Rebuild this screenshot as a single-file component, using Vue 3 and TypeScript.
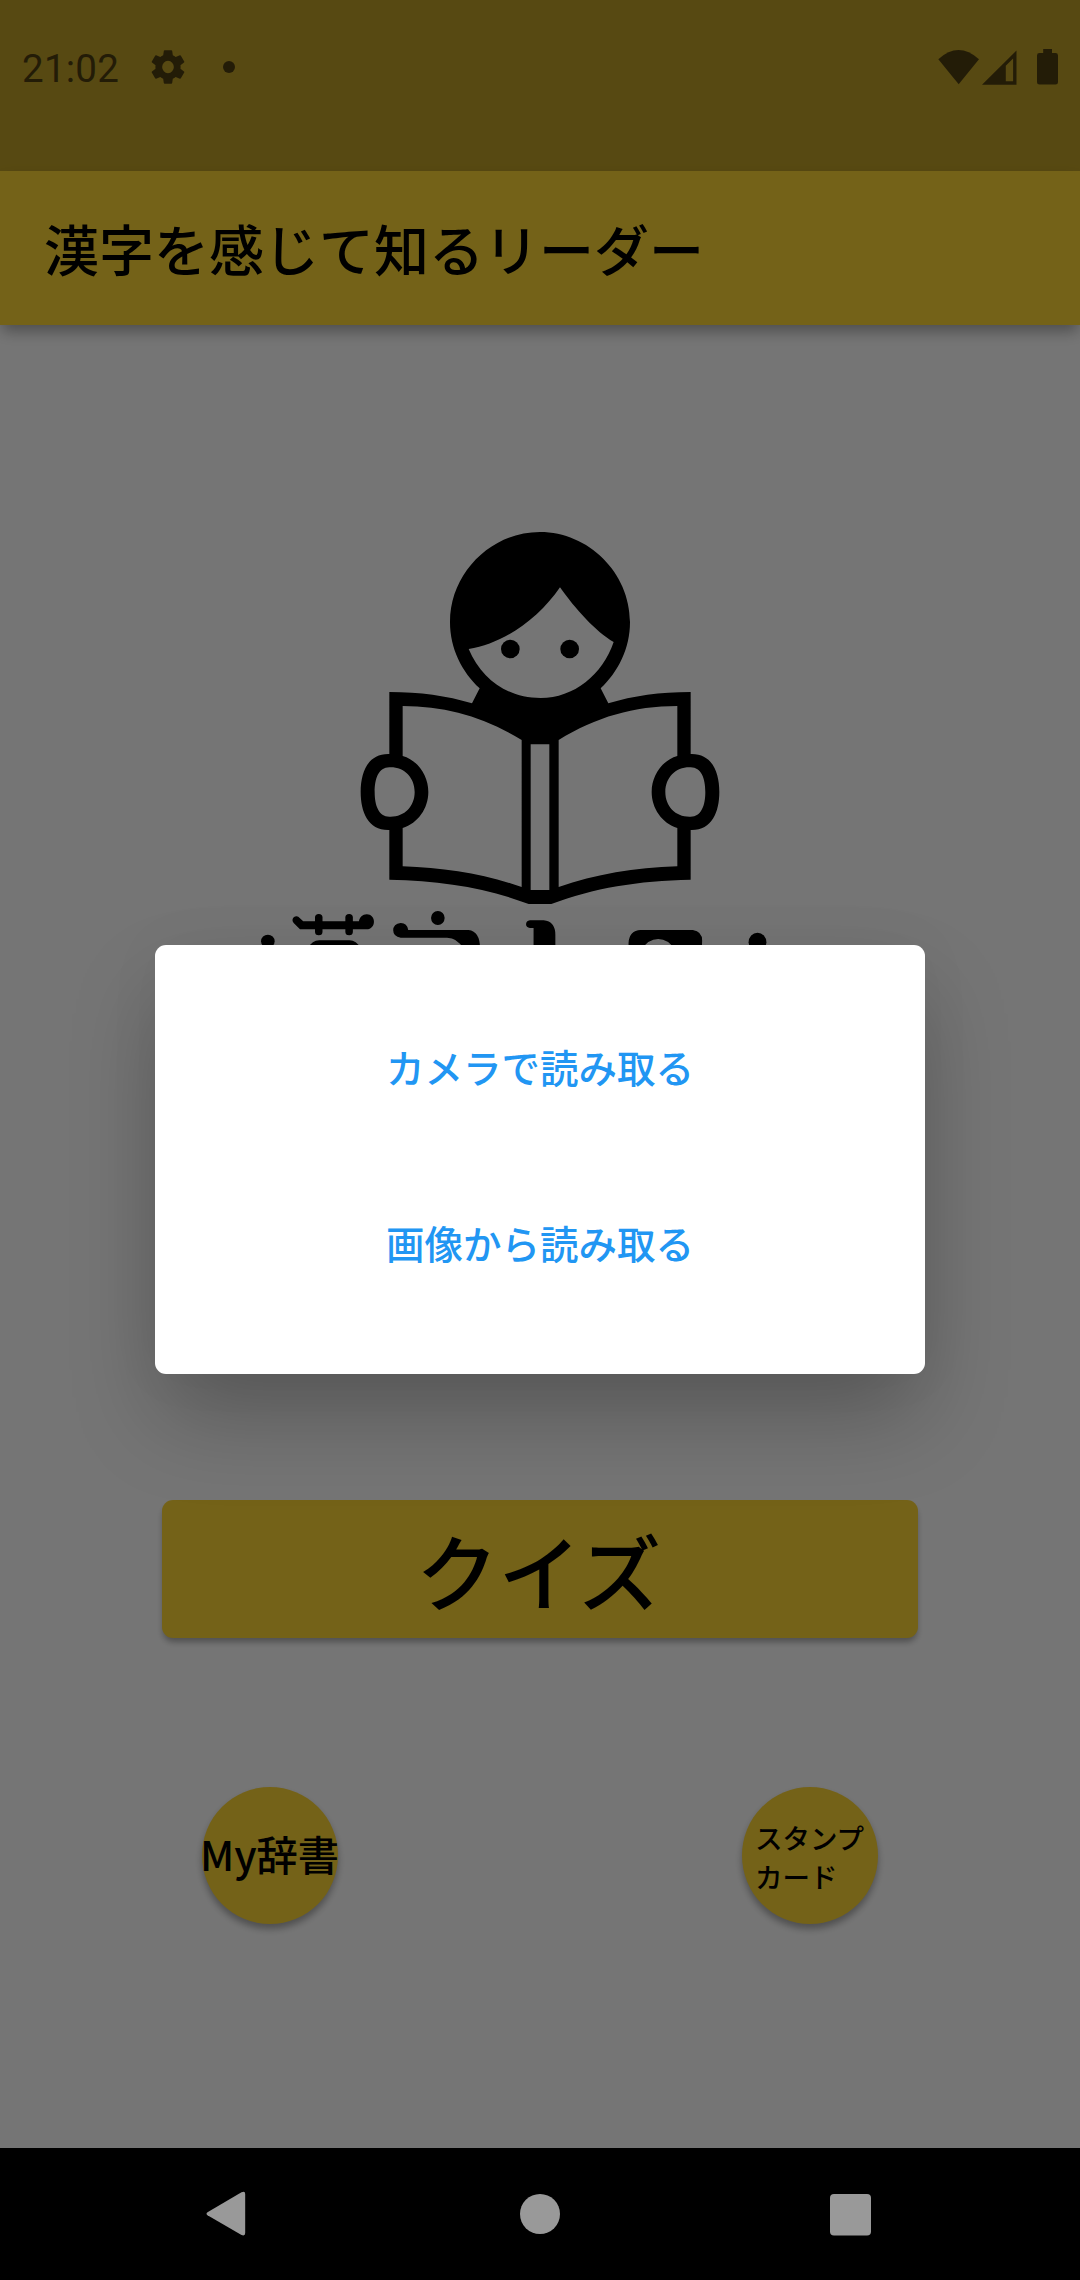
<script setup lang="ts">
import { ref } from 'vue'

const appTitle = ref('漢字を感じて知るリーダー')
const clock = ref('21:02')
const dialogActions = ref<string[]>(['カメラで読み取る', '画像から読み取る'])
</script>

<template>
  <div class="screen">
    <header class="status-bar">
      <span class="clock">{{ clock }}</span>
      <svg class="gear" viewBox="0 0 24 24">
        <path d="M19.14 12.94c.04-.3.06-.61.06-.94 0-.32-.02-.64-.07-.94l2.03-1.58a.49.49 0 0 0 .12-.61l-1.92-3.32a.49.49 0 0 0-.59-.22l-2.39.96c-.5-.38-1.03-.7-1.62-.94l-.36-2.54a.48.48 0 0 0-.48-.41h-3.84a.47.47 0 0 0-.47.41l-.36 2.54c-.59.24-1.13.57-1.62.94l-2.39-.96a.48.48 0 0 0-.59.22L2.74 8.87a.47.47 0 0 0 .12.61l2.03 1.58c-.05.3-.09.63-.09.94s.02.64.07.94l-2.03 1.58a.49.49 0 0 0-.12.61l1.92 3.32c.12.22.37.29.59.22l2.39-.96c.5.38 1.03.7 1.62.94l.36 2.54c.05.24.24.41.48.41h3.84c.24 0 .44-.17.47-.41l.36-2.54c.59-.24 1.13-.56 1.62-.94l2.39.96c.22.08.47 0 .59-.22l1.92-3.32a.47.47 0 0 0-.12-.61l-2.01-1.58zM12 15.6a3.61 3.61 0 0 1 0-7.2 3.61 3.61 0 0 1 0 7.2z" />
      </svg>
      <span class="dot"></span>
      <svg class="system-icons" viewBox="0 0 122 38">
        <path d="M.3 11.2Q20.5-7.2 41 11.2L20.7 36.2z" />
        <path fill-rule="evenodd" d="M44 36.7 78.500 2.6V36.7zM67.800 33.2H75.100V10.6L67.800 17.8z" />
        <path d="M105.2 1h8.800v4h3.600q2.400 0 2.400 2.400v26.800q0 2.400-2.400 2.400h-16.200q-2.400 0-2.400-2.400v-26.800q0-2.400 2.400-2.400h3.800z" />
      </svg>
    </header>

    <div class="app-bar"><h1>{{ appTitle }}</h1></div>

    <main class="content">
      <svg class="logo" viewBox="240 520 560 460">
        <g transform="translate(340 510) scale(.33333)">
          <path fill-rule="evenodd" d="M600 66C745 66 870 188 870 336C870 415 835 485 782 535L805 580C880 557 960 546 1052 546V732C1115 730 1138 785 1138 846S1115 962 1052 960V1109C895 1112 760 1134 634 1182H566C440 1134 305 1112 148 1109V960C85 962 62 907 62 846S85 730 148 732V546C240 546 320 557 396 580L419 535C365 485 330 415 330 336C330 188 455 66 600 66Z
            M386 417C490 401 595 327 660 232C705 296 768 366 821 396C788 494 702 564 602 564S424 507 386 417Z
            M188 588V738C234 751 265 797 265 846S234 940 188 954V1069C315 1073 435 1093 545 1131V690C432 621 318 588 188 588Z
            M1012 588V738C966 751 935 797 935 846S966 940 1012 954V1069C885 1073 765 1093 656 1131V690C768 621 882 588 1012 588Z
            M572 703H628V1140H572Z
            M148 772C192 770 224 802 224 846S192 922 148 920C116 920 104 886 104 846S116 772 148 772Z
            M1052 772C1008 770 976 802 976 846S1008 922 1052 920C1084 920 1096 886 1096 846S1084 772 1052 772Z" />
          <circle cx="511" cy="417" r="28" />
          <circle cx="689" cy="417" r="28" />
        </g>
        <g transform="translate(240 880) scale(.35714 .33333)">
          <ellipse cx="78" cy="184" rx="19" ry="20" />
          <path d="M147 121a11 12 0 0 1 20-7l10 10h156c2-12 10-21 22-21 12 0 20 10 20 22s-8 23-20 23H168l-17-18q-4-4-4-9z" />
          <rect x="210" y="102" width="21" height="64" rx="10.500" />
          <rect x="295" y="102" width="21" height="64" rx="10.500" />
          <path d="M190 205Q202 181 222 181H306Q326 181 338 205z" />
          <ellipse cx="554" cy="114" rx="19" ry="21" />
          <path d="M450 129q18 0 21 21H640Q672 154 672 205H625Q608 173 580 173H450q-21-3-21-22 0-19 21-22z" />
          <path d="M812 121H850Q883 124 883 165V210H822V144H812Q801 142 801 132.500T812 121z" />
          <path d="M1088 210V188Q1090 152 1122 150H1268Q1294 154 1294 182L1293 210H1218Q1200 177 1171 177T1124 210z" />
          <ellipse cx="1449" cy="187" rx="25" ry="29" />
        </g>
      </svg>
      <button class="quiz" type="button"><span>クイズ</span></button>
      <div class="round-row">
        <button class="round" type="button"><span>My辞書</span></button>
        <button class="round small" type="button"><span>スタンプ<br />カード</span></button>
      </div>
    </main>

    <nav class="nav-bar">
      <svg viewBox="0 0 48 48"><path d="M4.500 22.300 38.500 2.300Q42.200.5 42.200 4V43Q42.200 46.500 38.500 45L4.500 25.300Q2.500 23.700 4.500 22.300z" /></svg>
      <svg viewBox="0 0 48 48"><circle cx="24" cy="24" r="20" /></svg>
      <svg viewBox="0 0 48 48"><rect x="3" y="4" width="41" height="41.500" rx="4" /></svg>
    </nav>

    <div class="scrim">
      <div class="dialog" role="dialog">
        <button v-for="label in dialogActions" :key="label" class="action" type="button">{{ label }}</button>
      </div>
    </div>
  </div>
</template>

<style>
body {
  margin: 0;
  background: #000;
}
</style>

<style scoped>
.screen {
  position: relative;
  display: flex;
  flex-direction: column;
  width: 1080px;
  height: 2280px;
  overflow: hidden;
  background: #fff;
  color: #000;
  font-family: "Noto Sans CJK JP", sans-serif;
  font-weight: 500;
}
button {
  display: flex;
  align-items: center;
  justify-content: center;
  padding: 0;
  border: 0;
  font: inherit;
  color: inherit;
  white-space: nowrap;
}
.status-bar {
  display: flex;
  align-items: center;
  box-sizing: border-box;
  height: 171px;
  padding: 0 20px 37px 22px;
  background: #bea028;
  fill: #4e3e11;
}
.clock {
  width: 96px;
  font: 400 38.5px/44px Roboto, sans-serif;
  letter-spacing: 0.25px;
  color: #4e3e11;
  margin-top: 4px;
}
.gear {
  width: 42px;
  height: 42px;
  margin-left: 29px;
}
.dot {
  width: 12px;
  height: 12px;
  margin-left: 34px;
  border-radius: 50%;
  background: #4e3e11;
}
.system-icons {
  width: 122px;
  height: 38px;
  margin-left: auto;
}
.app-bar {
  display: flex;
  align-items: center;
  box-sizing: border-box;
  height: 154px;
  padding: 0 0 3px 44px;
  background: #fdd535;
  box-shadow: 0 8px 14px -2px rgba(0, 0, 0, 0.34);
}
h1 {
  margin: 0;
  font-size: 55px;
  font-weight: 500;
  line-height: 80px;
}
.content {
  display: flex;
  flex: 1;
  flex-direction: column;
  align-items: center;
  padding-top: 195px;
}
.logo {
  width: 560px;
  height: 460px;
  margin-left: -40px;
}
.quiz {
  box-sizing: border-box;
  width: 756px;
  height: 137.5px;
  margin-top: 520px;
  padding: 1px 3px 0 0;
  border-radius: 11px;
  background: #fdd535;
  box-shadow: 0 5px 6px -1px rgba(0, 0, 0, 0.32);
  font-size: 82.5px;
}
.round-row {
  display: flex;
  justify-content: space-around;
  width: 1080px;
  margin-top: 149px;
}
.round {
  box-sizing: border-box;
  width: 136.5px;
  height: 137px;
  padding: 0 1px 5px 0;
  border-radius: 50%;
  background: #fdd535;
  box-shadow: 0 5px 7px rgba(0, 0, 0, 0.32);
  font-size: 41.25px;
}
.small {
  padding: 4px 1px 0 0;
  font-size: 27.5px;
  line-height: 39.5px;
  text-align: left;
}
.nav-bar {
  display: flex;
  align-items: center;
  justify-content: space-between;
  box-sizing: border-box;
  height: 132px;
  padding: 0 205px 0 203px;
  background: #000;
  fill: #999;
}
.nav-bar svg {
  width: 48px;
  height: 48px;
}
.nav-bar svg:nth-child(2) {
  margin-left: 2px;
}
.scrim {
  position: absolute;
  inset: 0 0 132px;
  display: flex;
  align-items: flex-start;
  justify-content: center;
  background: rgba(0, 0, 0, 0.541);
}
.dialog {
  display: flex;
  flex-direction: column;
  align-items: center;
  gap: 44px;
  box-sizing: border-box;
  width: 770px;
  height: 429px;
  margin-top: 945px;
  padding-top: 55px;
  border-radius: 11px;
  background: #fff;
  box-shadow: 0 46px 90px -8px rgba(0, 0, 0, 0.26), 0 0 60px rgba(0, 0, 0, 0.04);
}
.action {
  height: 132px;
  background: none;
  font-size: 38.5px;
  color: #2196f3;
}
</style>
